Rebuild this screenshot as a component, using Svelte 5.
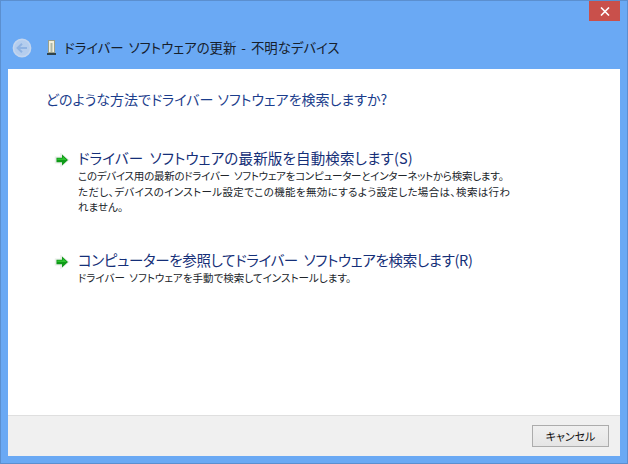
<script lang="ts">
    const options = [
        {
            title: 'ドライバー ソフトウェアの最新版を自動検索します(S)',
            track: 0.16,
            lines: [
                { text: 'このデバイス用の最新のドライバー ソフトウェアをコンピューターとインターネットから検索します。', track: -0.25 },
                { text: 'ただし、デバイスのインストール設定でこの機能を無効にするよう設定した場合は、検索は行わ', track: 0.36 },
                { text: 'れません。', track: 0 }
            ]
        },
        {
            title: 'コンピューターを参照してドライバー ソフトウェアを検索します(R)',
            track: -0.34,
            lines: [{ text: 'ドライバー ソフトウェアを手動で検索してインストールします。', track: 0.03 }]
        }
    ]
</script>

<div class="window">
    <div class="chrome">
        <button class="close" aria-label="閉じる">
            <svg width="10" height="9" viewBox="0 0 10 9"><path d="M1 .5 9 8.5M9 .5 1 8.5" stroke="#fff" stroke-width="1.6" /></svg>
        </button>
    </div>
    <div class="titlebar">
        <svg class="back" width="20" height="20" viewBox="0 0 20 20">
            <circle cx="10" cy="10" r="8.6" fill="#b4cdee" stroke="#c3d5ee" stroke-width="1.6" />
            <path d="M15 10H6M10 5.8 5.6 10l4.400 4.200" fill="none" stroke="#8fb3e3" stroke-width="2" />
        </svg>
        <svg class="device" width="10" height="17" viewBox="0 0 10 17">
            <rect x="1.500" y="1.500" width="6" height="12" fill="#f2efdc" stroke="#9aa08c" />
            <rect x="3.500" y="4" width="2" height="9" fill="#aeb8a8" />
            <rect x="0" y="14" width="9" height="2" fill="#2f424c" />
        </svg>
        <span class="title">ドライバー ソフトウェアの更新 - 不明なデバイス</span>
    </div>
    <div class="panel">
        <main class="content">
            <h1>どのような方法でドライバー ソフトウェアを検索しますか?</h1>
            {#each options as option}
                <div class="option">
                    <svg class="arrow" width="16" height="14" viewBox="0 0 16 14">
                        <path d="M1.500 4.200H7V1L14.500 7 7 13V9.800H1.500z" fill="#dfe5df" stroke="#eaeeea" stroke-width="1.500" />
                        <path d="M2.500 4.700H8V1.500L14 7 8 12.500V9.300H2.500z" fill="#0f9a18" />
                        <path d="M8.800 3.500 12.600 7H3.300V5.500H8.800z" fill="#2cc22f" />
                    </svg>
                    <div class="text">
                        <div class="option-title" style="letter-spacing: {option.track}px">{option.title}</div>
                        {#each option.lines as line}
                            <div class="line" style="letter-spacing: {line.track}px">{line.text}</div>
                        {/each}
                    </div>
                </div>
            {/each}
        </main>
        <footer class="footer">
            <button class="cancel">キャンセル</button>
        </footer>
    </div>
</div>

<style>
    :global(body) {
        margin: 0;
        background: #6aa9f4;
    }

    .window {
        box-sizing: border-box;
        width: 628px;
        height: 464px;
        display: flex;
        flex-direction: column;
        background: #6aa9f4;
        border: 1px solid #5b8fcf;
        padding: 0 7px 7px;
        font-family: 'Noto Sans CJK JP', 'Noto Sans', sans-serif;
        font-feature-settings: 'palt';
    }

    .chrome {
        height: 21px;
        display: flex;
        justify-content: flex-end;
        flex-shrink: 0;
    }

    .close {
        width: 31px;
        height: 20px;
        padding: 0;
        border: none;
        border-radius: 0;
        background: #c9504b;
        display: flex;
        align-items: center;
        justify-content: center;
    }

    .titlebar {
        height: 47px;
        flex-shrink: 0;
        display: flex;
        align-items: center;
        padding-left: 4px;
        padding-top: 4px;
        box-sizing: border-box;
    }

    .device {
        margin-left: 15px;
    }

    .title {
        margin-left: 7px;
        margin-top: -2px;
        font-size: 13.4px;
        word-spacing: 2px;
        color: #16202c;
    }

    .panel {
        flex: 1;
        display: flex;
        flex-direction: column;
        background: #fff;
    }

    .content {
        flex: 1;
        padding: 19px 0 0 38px;
    }

    h1 {
        margin: 0 0 38px;
        font-size: 14px;
        font-weight: 400;
        line-height: 22px;
        word-spacing: 1px;
        color: #1b3d8c;
    }

    .option {
        display: flex;
        margin-bottom: 35px;
    }

    .arrow {
        margin: 5px 8px 0 8px;
        flex-shrink: 0;
    }

    .option-title {
        font-size: 14.5px;
        line-height: 20px;
        word-spacing: 3px;
        color: #152f78;
    }

    .line {
        font-size: 10.5px;
        line-height: 15.5px;
        word-spacing: 2px;
        color: #20242a;
        white-space: nowrap;
    }

    .footer {
        height: 41px;
        flex-shrink: 0;
        box-sizing: border-box;
        border-top: 1px solid #dfdfdf;
        background: #f0f0f0;
        display: flex;
        justify-content: flex-end;
        align-items: flex-start;
        padding: 9px 11px 0 0;
    }

    .cancel {
        width: 77px;
        height: 22px;
        padding: 0;
        border: 1px solid #acacac;
        border-radius: 0;
        background: linear-gradient(#f0f0f0, #e5e5e5);
        font: inherit;
        font-size: 11px;
        line-height: 20px;
        color: #111;
    }
</style>
